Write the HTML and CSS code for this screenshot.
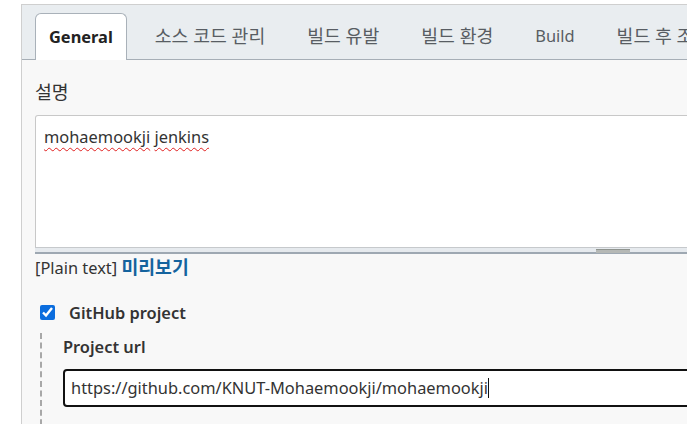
FILE: index.html
```html
<!DOCTYPE html>
<html lang="ko">
<head>
<meta charset="utf-8">
<title>Jenkins config</title>
<link rel="stylesheet" href="styles.css">
</head>
<body>
<div class="panel">
  <div class="tabbar">
    <div class="tab active">General</div>
    <div class="tab ko">소스 코드 관리</div>
    <div class="tab ko">빌드 유발</div>
    <div class="tab ko">빌드 환경</div>
    <div class="tab">Build</div>
    <div class="tab ko">빌드 후 조치</div>
  </div>
  <div class="content">
    <div class="field-label ko">설명</div>
    <div class="textarea"><span class="spell">mohaemookji</span> <span class="spell">jenkins</span></div>
    <div class="handle"><span class="grip"></span></div>
    <div class="preview-row">[Plain text] <a class="preview-link ko">미리보기</a></div>
    <label class="check-row"><input type="checkbox" checked class="check"><span class="check-label">GitHub project</span></label>
    <div class="nested">
      <div class="sub-label">Project url</div>
      <div class="input">https://github.com/KNUT-Mohaemookji/mohaemookji<span class="caret"></span></div>
    </div>
  </div>
</div>
</body>
</html>
```
FILE: styles.css
```css
html, body {
  margin: 0;
  padding: 0;
  overflow: hidden;
  background: #ffffff;
}
body {
  font-family: "Noto Sans", "Noto Sans CJK KR", sans-serif;
  font-size: 16.4px;
  color: #333;
  width: 687px;
  height: 424px;
}
.ko {
  font-size: 18.3px;
}
.panel {
  margin: 4px 0 0 21px;
  width: 1300px;
  border-left: 1px solid #cfcfcf;
  border-top: 1px solid #cfcfcf;
  background: #f8f8f8;
  height: 430px;
}
.tabbar {
  display: flex;
  gap: 14px;
  align-items: flex-end;
  padding-left: 13px;
  background: #e9edf0;
  border-bottom: 1px solid #a6aeb6;
  box-sizing: border-box;
  height: 55px;
}
.tab {
  padding: 0 14px;
  height: 46px;
  line-height: 46px;
  color: #585d63;
  white-space: nowrap;
  box-sizing: border-box;
}
.tab.active {
  background: #fff;
  border: 1px solid #a9b1b9;
  border-bottom: none;
  border-radius: 6px 6px 0 0;
  margin-bottom: -1px;
  height: 47px;
  padding: 0 13px;
  font-weight: 700;
  color: #222;
}
.content {
  padding-left: 13px;
}
.field-label {
  margin-top: 19px;
  line-height: 26px;
  height: 26px;
}
.textarea {
  margin-top: 10px;
  width: 1156px;
  height: 132px;
  box-sizing: border-box;
  background: #fff;
  border: 1px solid #c8c8c8;
  border-bottom: none;
  border-radius: 3px 3px 0 0;
  padding: 8px 8px;
  line-height: 26px;
  color: #333;
}
.spell {
  text-decoration: underline wavy #e02020;
  text-decoration-thickness: 1px;
  text-underline-offset: 4px;
}
.handle {
  width: 1156px;
  height: 7px;
  box-sizing: border-box;
  background: #e6eaee;
  border-top: 1px solid #c6c9cc;
  border-bottom: 2px solid #9ea8b2;
  display: flex;
  justify-content: center;
  padding-top: 1px;
}
.grip {
  display: block;
  width: 34px;
  height: 3px;
  background: #b5b8b5;
  border-top: 1px solid #8f948f;
}
.preview-row {
  line-height: 26px;
  height: 26px;
  color: #333;
}
.preview-link {
  font-weight: 700;
  color: #14639e;
}
.check-row {
  display: flex;
  align-items: center;
  margin-top: 19px;
  height: 26px;
}
.check {
  margin: 0 0 0 5px;
  width: 15px;
  height: 15px;
  accent-color: #0b6dde;
}
.check-label {
  margin-left: 14px;
  font-weight: 600;
}
.nested {
  margin: 8px 0 0 5px;
  border-left: 2px dashed #a8a8a8;
  padding: 1px 0 0 21px;
  height: 120px;
}
.sub-label {
  line-height: 26px;
  height: 26px;
  font-weight: 600;
}
.input {
  margin-top: 9px;
  width: 1100px;
  height: 38px;
  box-sizing: border-box;
  border: 2px solid #111;
  border-radius: 4px;
  background: #fff;
  padding: 0 6px;
  line-height: 34px;
  color: #333;
  white-space: nowrap;
}
.caret {
  display: inline-block;
  width: 1px;
  height: 20px;
  background: #111;
  vertical-align: -4px;
}
```
